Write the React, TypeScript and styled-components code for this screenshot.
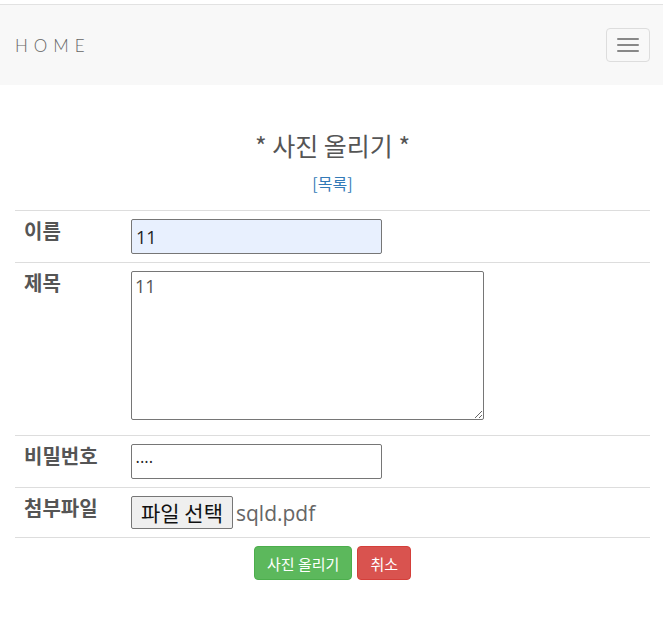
import React from 'react';
import styled, { createGlobalStyle } from 'styled-components';

const GlobalStyle = createGlobalStyle`
  * { box-sizing: border-box; }
  body {
    margin: 0;
    padding-top: 4px;
    background: #fff;
    color: #333;
    font-family: "Open Sans", "Noto Sans CJK KR", sans-serif;
    font-size: 14px;
  }
`;

const Navbar = styled.nav`
  height: 81px;
  border-top: 1px solid #e2e2e2;
  background-color: #f8f8f8;
  display: flex;
  align-items: center;
  justify-content: space-between;
  padding: 0 13px 0 15px;
`;

const Brand = styled.a`
  font-family: Lato, "Noto Sans", sans-serif;
  font-size: 17px;
  font-weight: 300;
  letter-spacing: 6px;
  color: #666;
  text-decoration: none;
`;

const Toggle = styled.button`
  width: 44px;
  height: 34px;
  border: 1px solid #ddd;
  border-radius: 4px;
  background: transparent;
  display: flex;
  flex-direction: column;
  align-items: center;
  justify-content: center;
  gap: 4px;
  padding: 0;
`;

const IconBar = styled.span`
  display: block;
  width: 22px;
  height: 2px;
  border-radius: 1px;
  background-color: #888;
`;

const Main = styled.main`
  padding: 0 13px 0 15px;
  text-align: center;
`;

const Title = styled.h3`
  margin: 45px 0 0;
  font-size: 25px;
  line-height: 30px;
  font-weight: 400;
  color: #555;
  font-family: "Noto Sans CJK KR", sans-serif;
`;

const ListLink = styled.a`
  display: inline-block;
  margin-top: 13px;
  font-size: 16px;
  line-height: 20px;
  color: #337ab7;
  text-decoration: none;
  font-family: "Noto Sans CJK KR", sans-serif;
`;

const Table = styled.table`
  width: 100%;
  margin-top: 16px;
  border-collapse: collapse;
  text-align: left;
  border-bottom: 1px solid #ddd;
`;

const Row = styled.tr`
  border-top: 1px solid #ddd;
`;

const Label = styled.th`
  width: 108px;
  padding: 7px 8px 8px 9px;
  vertical-align: top;
  font-family: "Noto Sans CJK KR", sans-serif;
  font-size: 20px;
  font-weight: 700;
  color: #555;
  line-height: 26px;
`;

const Cell = styled.td`
  padding: 8px;
  vertical-align: top;
`;

const TextInput = styled.input<{ $filled?: boolean; $secret?: boolean }>`
  display: block;
  width: 251px;
  height: 35px;
  padding: 1px 4px;
  border: 1px solid #767676;
  border-radius: 2px;
  background-color: ${p => (p.$filled ? '#e8f0fe' : '#fff')};
  font-family: "Open Sans", sans-serif;
  font-size: ${p => (p.$secret ? '9px' : '18px')};
  letter-spacing: ${p => (p.$secret ? '1px' : '0')};
  color: #222;
`;

const TextArea = styled.textarea`
  display: block;
  width: 353px;
  height: 149px;
  margin-bottom: 7px;
  padding: 2px 3px;
  border: 1px solid #767676;
  border-radius: 2px;
  font-family: "Open Sans", sans-serif;
  font-size: 18px;
  color: #555;
  resize: both;
`;

const FileRow = styled.div`
  display: flex;
  align-items: center;
  gap: 3px;
`;

const FileButton = styled.button`
  height: 33px;
  padding: 0 9px;
  border: 1px solid #767676;
  border-radius: 2px;
  background-color: #efefef;
  font-family: "Noto Sans CJK KR", sans-serif;
  font-size: 21px;
  line-height: 1;
  color: #111;
`;

const FileName = styled.span`
  font-family: "Open Sans", sans-serif;
  font-size: 21px;
  color: #666;
`;

const Actions = styled.div`
  display: flex;
  justify-content: center;
  gap: 5px;
  padding-top: 8px;
`;

const ActionButton = styled.button<{ $variant: 'success' | 'danger' }>`
  height: 34px;
  padding: 0 12px;
  border-radius: 4px;
  border: 1px solid ${p => (p.$variant === 'success' ? '#4cae4c' : '#d43f3a')};
  background-color: ${p => (p.$variant === 'success' ? '#5cb85c' : '#d9534f')};
  color: #fff;
  font-family: "Noto Sans CJK KR", sans-serif;
  font-size: 15px;
`;

const App: React.FC = () => {
  return (
    <>
      <GlobalStyle />
      <Navbar>
        <Brand href="#">HOME</Brand>
        <Toggle type="button" aria-label="menu">
          <IconBar />
          <IconBar />
          <IconBar />
        </Toggle>
      </Navbar>
      <Main>
        <Title>* 사진 올리기 *</Title>
        <ListLink href="#">[목록]</ListLink>
        <Table>
          <tbody>
            <Row>
              <Label>이름</Label>
              <Cell>
                <TextInput $filled defaultValue="11" />
              </Cell>
            </Row>
            <Row>
              <Label>제목</Label>
              <Cell>
                <TextArea defaultValue="11" />
              </Cell>
            </Row>
            <Row>
              <Label>비밀번호</Label>
              <Cell>
                <TextInput type="password" $secret defaultValue="1111" />
              </Cell>
            </Row>
            <Row>
              <Label>첨부파일</Label>
              <Cell>
                <FileRow>
                  <FileButton type="button">파일 선택</FileButton>
                  <FileName>sqld.pdf</FileName>
                </FileRow>
              </Cell>
            </Row>
          </tbody>
        </Table>
        <Actions>
          <ActionButton $variant="success">사진 올리기</ActionButton>
          <ActionButton $variant="danger">취소</ActionButton>
        </Actions>
      </Main>
    </>
  );
};

export default App;
